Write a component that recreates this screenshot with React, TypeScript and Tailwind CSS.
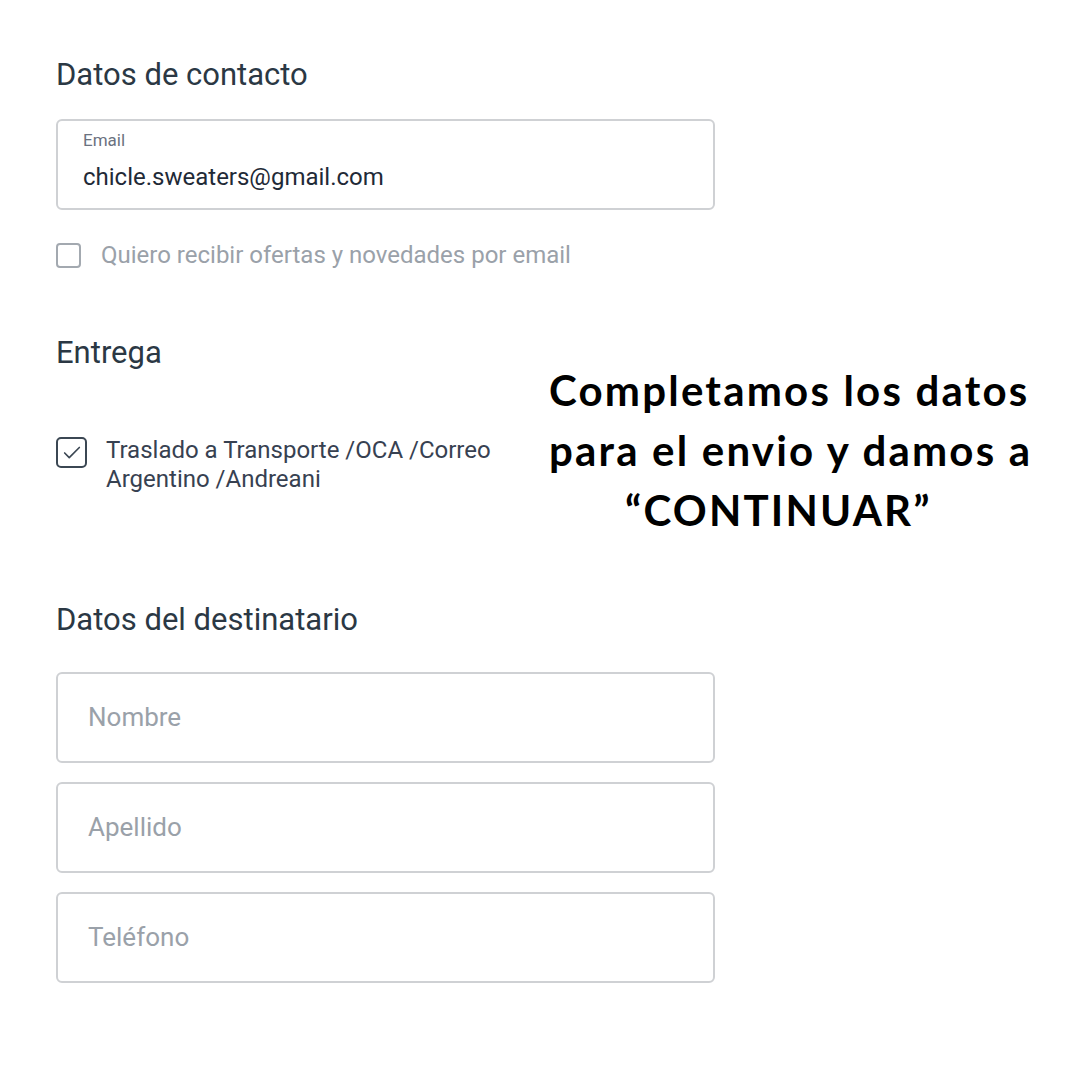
import { Check } from 'lucide-react';

function Field({ placeholder }: { placeholder: string }) {
  return (
    <div className="h-[91px] rounded-[6px] border-2 border-[#cfd1d4] flex items-center pl-[30px]">
      <span className="text-[26px] text-[#9aa1a9]">{placeholder}</span>
    </div>
  );
}

export default function App() {
  return (
    <div className="relative w-[1080px] h-[1080px] bg-white font-['Roboto',sans-serif]">
      <div className="w-[659px] ml-[56px] pt-[56px] flex flex-col">
        <h2 className="text-[31px] leading-[38px] text-[#2b3844]">Datos de contacto</h2>

        <div className="mt-[25px] h-[91px] rounded-[6px] border-2 border-[#cfd1d4] pl-[25px] pt-[8px]">
          <div className="text-[17px] leading-[22px] text-[#6b7280]">Email</div>
          <div className="mt-[11px] text-[24px] leading-[30px] text-[#1f2a37]">chicle.sweaters@gmail.com</div>
        </div>

        <label className="mt-[31px] flex items-center gap-[20px]">
          <span className="w-[25px] h-[25px] rounded-[4px] border-2 border-[#a3a9b0]" />
          <span className="text-[24px] leading-[28px] text-[#9aa1a9]">Quiero recibir ofertas y novedades por email</span>
        </label>

        <h2 className="mt-[65px] text-[31px] leading-[38px] text-[#2b3844]">Entrega</h2>

        <label className="mt-[64px] flex items-start gap-[19px]">
          <span className="mt-[1px] w-[31px] h-[31px] rounded-[5px] border-2 border-[#3b4753] flex items-center justify-center">
            <Check size={22} strokeWidth={1.8} className="text-[#3b4753]" />
          </span>
          <span className="w-[420px] text-[24px] leading-[29px] text-[#374151]">
            Traslado a Transporte /OCA /Correo Argentino /Andreani
          </span>
        </label>

        <h2 className="mt-[107px] text-[31px] leading-[38px] text-[#2b3844]">Datos del destinatario</h2>

        <div className="mt-[33px] flex flex-col gap-[19px]">
          <Field placeholder="Nombre" />
          <Field placeholder="Apellido" />
          <Field placeholder="Teléfono" />
        </div>
      </div>

      <div className="absolute left-[549px] top-[360px] font-['Lato',sans-serif] font-bold text-black text-[42px] leading-[60px] tracking-[2.2px]">
        <div>Completamos los datos</div>
        <div>para el envio y damos a</div>
        <div className="pl-[76px]">“CONTINUAR”</div>
      </div>
    </div>
  );
}
